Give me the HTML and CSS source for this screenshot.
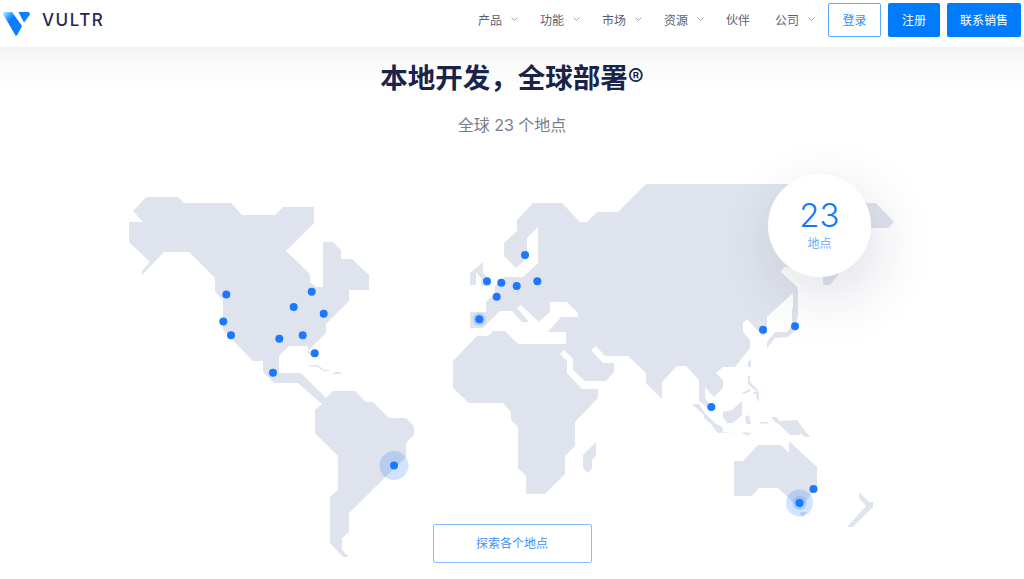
FILE: index.html
```html
<!DOCTYPE html>
<html lang="zh-CN">
<head>
<meta charset="utf-8">
<title>Vultr</title>
<link rel="stylesheet" href="styles.css">
</head>
<body>
<header class="nav">
  <a class="brand">
    <svg class="brand-mark" viewBox="0 0 32 32" width="32" height="32">
      <defs>
        <linearGradient id="vg" x1="0.1" y1="0" x2="0.6" y2="0.6">
          <stop offset="0" stop-color="#a6e0ff"/>
          <stop offset="0.35" stop-color="#3aa2ff"/>
          <stop offset="0.6" stop-color="#0b7dff"/>
          <stop offset="1" stop-color="#0b7dff"/>
        </linearGradient>
      </defs>
      <polygon fill="url(#vg)" points="3,10 4,8 12,8 22,22 17,31.500 15.500,31.500"/>
      <polygon fill="#0b7dff" points="18.500,8 29,8 30,10.500 24,18.500"/>
    </svg>
    <span class="brand-name">VULTR</span>
  </a>
  <nav class="menu">
    <a class="menu-item">产品<svg class="chev" viewBox="0 0 7 5"><path d="M.5.5 3.500 3.500 6.500.5"/></svg></a>
    <a class="menu-item">功能<svg class="chev" viewBox="0 0 7 5"><path d="M.5.5 3.500 3.500 6.500.5"/></svg></a>
    <a class="menu-item">市场<svg class="chev" viewBox="0 0 7 5"><path d="M.5.5 3.500 3.500 6.500.5"/></svg></a>
    <a class="menu-item">资源<svg class="chev" viewBox="0 0 7 5"><path d="M.5.5 3.500 3.500 6.500.5"/></svg></a>
    <a class="menu-item">伙伴</a>
    <a class="menu-item">公司<svg class="chev" viewBox="0 0 7 5"><path d="M.5.5 3.500 3.500 6.500.5"/></svg></a>
  </nav>
  <div class="actions">
    <a class="btn btn-outline">登录</a>
    <a class="btn btn-solid btn-signup">注册</a>
    <a class="btn btn-solid btn-sales">联系销售</a>
  </div>
</header>

<main class="hero">
  <h1 class="title">本地开发，全球部署<sup class="reg">®</sup></h1>
  <p class="subtitle">全球 23 个地点</p>
  <div class="map">
    <svg class="map-svg" viewBox="0 160 1024 400" width="1024" height="400">
      <g class="land">
        <polygon points="146,197 178,197 184,203 231,203 242,215 275,215 283,207 314,207 314,223 286,251 310,274 310,282 316,287 323,287 323,242 333,242 341,250 341,259 352,259 369,275 369,290 349,290 349,301 326,324 326,333 307,352 313,358 307,346 289,346 279,356 279,373 301,373 326,398 333,391 355,391 366,402 373,402 389,418 406,418 414,426 414,435 406,443 406,457 349,513 349,532 342,538 342,550 348,556 348,557 343,557 330,543 330,497 338,490 338,456 315,433 315,410 322,404 298,383 274,383 263,372 263,361 253,361 223,330 223,300 215,292 215,278 189,252 164,252 142,275 142,271 150,262 129,242 129,222 143,222 133,211"/>
        <polygon points="309,365 318,365 324,370 329,370 329,371 323,371 317,366.500 309,366.500"/>
        <polygon points="333,373 336,372 340,372 341,374 333,374"/>
        <polygon points="646,184 790,184 855,196 867,203 876,203 894,222 888,228 860,228 845,262 837,276 830,285 823,285 823,272 800,268 784,267 781,272 797,287 798,290 798,315 795,330 788,337 775,338 767,348 767,342 775,332 787,332 792,325 792,310 793,307 793,293 767,317 767,333 763,336 759,332 747,319 743,323 743,332 750,340 750,348 735,367 723,367 716,373 723,380 723,388 714,397 705,387 705,398 712,407 709,409 699,401 699,380 686,366 677,366 662,382 662,399 646,383 646,373 628,356 605,356 596,346 591,350 603,363 614,363 614,372 606,381 585,381 573,370 573,359 564,350 560,354 567,361 567,373 582,389 598,389 598,398 575,422 575,446 565,456 565,474 545,494 526,494 526,476 518,468 518,427 511,420 511,412 503,403 469,403 453,388 453,361 477,336 488,336 493,331 505,331 518,344 566,344 566,332 548,332 561,317 578,317 578,313 567,302 550,302 550,312 539,322 521,305 517,308 529,322 522,322 512,311 500,311 483,328 470,328 470,312 486,312 486,302 495,293 495,285 505,277 523,277 538,263 538,227 527,238 527,258 516,268 504,256 504,243 517,231 517,220 533,203 562,203 580,222 587,222 597,212 618,212"/>
        <polygon points="470,285 470,273 483,262 483,273 490,280 490,286 481,286 481,278 476,272 476,285"/>
        <polygon points="583,455 596,442 596,456 592,460 592,468 588,473 583,468"/>
        <polygon points="692,404 699,404 705,413 715,423 722,427 723,432 735,432 718,433 710,423 704,418 704,415"/>
        <polygon points="723,412 732,410 742,401 742,415 733,423 727,423 723,417"/>
        <polygon points="745,417 749,415 751,424 746,424"/>
        <polygon points="742,432 752,433 747,436"/>
        <polygon points="760,422 768,422 768,423.500 760,423.500"/>
        <polygon points="771,417 777,417 779,421 797,420 803,428 810,437 805,437 800,433 800,435 790,435 780,425 775,422"/>
        <polygon points="748,362 751,359 751,367 748,367"/>
        <polygon points="748,376 750,376 750,382 759,391 757,392 748,384"/>
        <polygon points="742,393 750,389 751,391 744,394"/>
        <polygon points="753,392 759,392 759,402 756,397 757,394 753,394"/>
        <polygon points="734,461 743,461 758,445 781,445 789,453 789,441 817,467 817,487 800,509 778,488 759,488 752,496 734,496"/>
        <polygon points="800,512 807,512 803,517 801,516"/>
        <polygon points="859,492 869,502 873,502 873,507 853,527 847,527 866,506 859,498"/>
      </g>
      <g class="halo">
        <circle cx="394" cy="465.500" r="14.500"/>
        <circle cx="479.300" cy="319.300" r="6.500"/>
        <circle cx="799.500" cy="503" r="13.500"/>
        <circle cx="799.500" cy="503" r="7"/>
      </g>
      <g class="dots">
        <circle cx="226.300" cy="294.500" r="4"/>
        <circle cx="223.300" cy="321.500" r="4"/>
        <circle cx="231" cy="335.300" r="4"/>
        <circle cx="293.700" cy="307" r="4"/>
        <circle cx="311.700" cy="291.700" r="4"/>
        <circle cx="323.700" cy="313.700" r="4"/>
        <circle cx="279.300" cy="338.700" r="4"/>
        <circle cx="302.700" cy="335.300" r="4"/>
        <circle cx="314.700" cy="353.300" r="4"/>
        <circle cx="273" cy="372.700" r="4"/>
        <circle cx="394" cy="465.500" r="4"/>
        <circle cx="487" cy="281.300" r="4"/>
        <circle cx="501.300" cy="282.700" r="4"/>
        <circle cx="516.700" cy="286" r="4"/>
        <circle cx="537.300" cy="281.300" r="4"/>
        <circle cx="525" cy="255" r="4"/>
        <circle cx="496.700" cy="296.700" r="4"/>
        <circle cx="479.300" cy="319.300" r="4"/>
        <circle cx="763" cy="329.700" r="4"/>
        <circle cx="795" cy="326.300" r="4"/>
        <circle cx="711.300" cy="407" r="4"/>
        <circle cx="813.500" cy="489" r="4"/>
        <circle cx="799.500" cy="503" r="4"/>
      </g>
    </svg>
    <div class="badge">
      <span class="badge-num">23</span>
      <span class="badge-label">地点</span>
    </div>
  </div>
  <a class="explore">探索各个地点</a>
</main>
</body>
</html>
```
FILE: styles.css
```css
* { box-sizing: border-box; }
html, body { margin: 0; padding: 0; background: #fff; }
body {
  font-family: Inter, "Noto Sans CJK SC", "Noto Sans", sans-serif;
  height: 579px;
  overflow: hidden;
}
.nav {
  display: flex;
  align-items: center;
  height: 47px;
  padding: 0 3px 7px 0;
  background: #fff;
}
.brand { display: flex; align-items: center; }
.brand-mark { display: block; margin-right: 10px; }
.brand-name {
  font-size: 17px;
  font-weight: 500;
  letter-spacing: 1.500px;
  color: #1e2a52;
}
.menu { display: flex; gap: 25px; margin-left: auto; margin-top: -2px; }
.menu-item {
  display: flex;
  align-items: center;
  font-size: 12px;
  color: #5a5f74;
}
.chev {
  width: 7px;
  height: 5px;
  margin-left: 9px;
  margin-right: -3px;
  fill: none;
  stroke: #9ea3b3;
  stroke-width: 1;
}
.actions { display: flex; gap: 7px; margin-left: 16px; }
.btn {
  display: flex;
  align-items: center;
  justify-content: center;
  height: 34px;
  padding-bottom: 2px;
  font-size: 12px;
  border-radius: 2px;
}
.btn-outline { width: 53px; border: 1px solid #5aa9ff; color: #2f8fff; background: #fff; }
.btn-solid { background: #007bfc; color: #fff; }
.btn-signup { width: 52px; }
.btn-sales { width: 74px; }
.hero {
  display: flex;
  flex-direction: column;
  align-items: center;
  height: 532px;
  padding-top: 11px;
  background: linear-gradient(#f3f3f3 0, #fafafa 14px, #fff 46px);
}
.title {
  margin: 0;
  font-size: 27.500px;
  line-height: 40px;
  font-weight: 700;
  color: #1a2349;
  white-space: nowrap;
}
.reg {
  font-size: 24px;
  font-weight: 400;
  line-height: 0;
  vertical-align: 2px;
}
.subtitle {
  margin: 17px 0 0;
  font-size: 16px;
  line-height: 20px;
  color: #7a7e8c;
}
.map {
  position: relative;
  flex: none;
  width: 1024px;
  height: 364px;
  margin-top: 25px;
}
.map-svg { display: block; position: absolute; left: 0; top: 0; overflow: visible; }
.land polygon { fill: #dfe3ed; }
.halo circle { fill: #1a78ff; fill-opacity: 0.2; }
.dots circle { fill: #1c78ff; }
.badge {
  position: absolute;
  left: 768px;
  top: 14px;
  width: 103px;
  height: 103px;
  border-radius: 50%;
  background: #fff;
  box-shadow: 8px 18px 60px rgba(20, 30, 70, 0.14);
  display: flex;
  flex-direction: column;
  align-items: center;
  padding-top: 21px;
}
.badge-num {
  font-size: 33px;
  line-height: 40px;
  font-weight: 300;
  color: #0a7cfc;
}
.badge-label {
  font-size: 12px;
  line-height: 16px;
  margin-top: 1px;
  color: #6ea8fb;
}
.explore {
  position: relative;
  display: flex;
  align-items: center;
  justify-content: center;
  width: 159px;
  height: 39px;
  flex: none;
  padding-bottom: 2px;
  border: 1px solid #84bdff;
  border-radius: 2px;
  font-size: 12px;
  color: #3d8ff5;
  background: #fff;
}
```
